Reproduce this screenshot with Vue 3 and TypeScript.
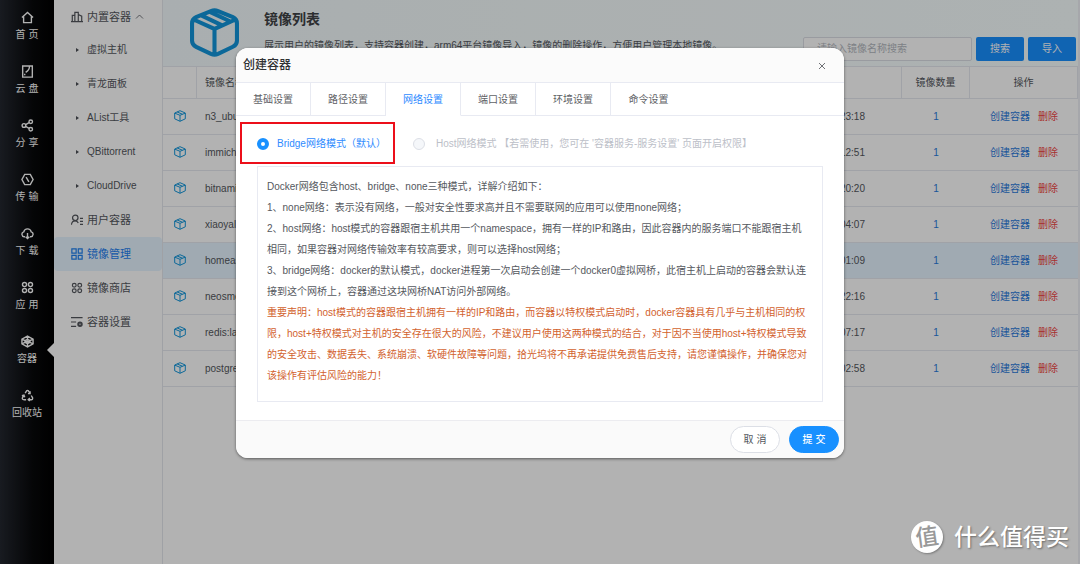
<script setup lang="ts">
import { ref } from 'vue'

const navItems = [
  { label: '首 页', icon: 'home' },
  { label: '云 盘', icon: 'disk' },
  { label: '分 享', icon: 'share' },
  { label: '传 输', icon: 'transfer' },
  { label: '下 载', icon: 'download' },
  { label: '应 用', icon: 'apps' },
  { label: '容器', icon: 'container' },
  { label: '回收站', icon: 'recycle' },
]
const builtIn = ['虚拟主机', '青龙面板', 'AList工具', 'QBittorrent', 'CloudDrive']
const menus = [
  { label: '用户容器', icon: 'user' },
  { label: '镜像管理', icon: 'grid' },
  { label: '镜像商店', icon: 'apps' },
  { label: '容器设置', icon: 'settings' },
]
const rows = [
  { name: 'n3_ubuntu', time: '15:23:18', count: 1 },
  { name: 'immich', time: '14:12:51', count: 1 },
  { name: 'bitnami', time: '13:20:20', count: 1 },
  { name: 'xiaoyaliu', time: '11:04:07', count: 1 },
  { name: 'homeassistant', time: '10:01:09', count: 1 },
  { name: 'neosmemo', time: '18:22:16', count: 1 },
  { name: 'redis:latest', time: '17:07:17', count: 1 },
  { name: 'postgres', time: '16:02:58', count: 1 },
]
const tabs = ['基础设置', '路径设置', '网络设置', '端口设置', '环境设置', '命令设置']
const activeTab = ref('网络设置')
const mode = ref('bridge')
const keyword = ref('')

const intro = [
  'Docker网络包含host、bridge、none三种模式，详解介绍如下：',
  '1、none网络：表示没有网络，一般对安全性要求高并且不需要联网的应用可以使用none网络；',
  '2、host网络：host模式的容器跟宿主机共用一个namespace，拥有一样的IP和路由，因此容器内的服务端口不能跟宿主机\n相同，如果容器对网络传输效率有较高要求，则可以选择host网络；',
  '3、bridge网络：docker的默认模式，docker进程第一次启动会创建一个docker0虚拟网桥，此宿主机上启动的容器会默认连\n接到这个网桥上，容器通过这块网桥NAT访问外部网络。',
]
const warning =
  '重要声明：host模式的容器跟宿主机拥有一样的IP和路由，而容器以特权模式启动时，docker容器具有几乎与主机相同的权\n限，host+特权模式对主机的安全存在很大的风险，不建议用户使用这两种模式的结合，对于因不当使用host+特权模式导致\n的安全攻击、数据丢失、系统崩溃、软硬件故障等问题，拾光坞将不再承诺提供免费售后支持，请您谨慎操作，并确保您对\n该操作有评估风险的能力！'
</script>

<template>
  <div class="app">
    <svg class="defs" aria-hidden="true">
      <symbol id="i-home" viewBox="0 0 14 14"><path d="M1 7 7 1.500 13 7M2.800 5.800V12.500H11.200V5.800" /></symbol>
      <symbol id="i-disk" viewBox="0 0 14 14"><path d="M1.800 1H12.200V13H1.800ZM9 1.500Q9.500 5 5 8M4 9.500V11" /></symbol>
      <symbol id="i-share" viewBox="0 0 14 14"><circle cx="3.200" cy="7" r="2" /><circle cx="10.500" cy="3" r="1.900" /><circle cx="10.500" cy="11" r="1.900" /><path d="M5 6 8.700 4M5 8 8.700 10" /></symbol>
      <symbol id="i-transfer" viewBox="0 0 14 14"><path d="M4 1.500H10L13 7 10 12.500H4L1 7ZM5.500 4.500 8.500 9.500" /></symbol>
      <symbol id="i-download" viewBox="0 0 14 14"><path d="M4.300 10.500H3.500A2.700 2.700 0 0 1 3 5.200 4.100 4.100 0 0 1 11 5.200 2.700 2.700 0 0 1 10.500 10.500H9.700M7 6.500V12.500M5 10.500 7 12.500 9 10.500" /></symbol>
      <symbol id="i-apps" viewBox="0 0 14 14"><circle cx="3.800" cy="3.800" r="2.200" /><circle cx="10.200" cy="3.800" r="2.200" /><circle cx="3.800" cy="10.200" r="2.200" /><circle cx="10.200" cy="10.200" r="2.200" /></symbol>
      <symbol id="i-container" viewBox="0 0 14 14"><path d="M7 1.200 13 4.500V9.500L7 12.800 1 9.500V4.500ZM1 4.500 7 7.500 13 4.500M1 9.500 7 6.500 13 9.500M7 1.500V4.800M7 12.500V9.200M4.300 6 7 4.700 9.700 6V8L7 9.300 4.300 8Z" /></symbol>
      <symbol id="i-recycle" viewBox="0 0 14 14"><path d="M4.500 4.500 6 2Q7 1 8 2L9.500 4.500M9.800 2.500V5H7.500M11 7 12.500 9.500Q12.800 11.500 11 11.500H8M9.500 9.800 7.800 11.500 9.500 13M5.500 11.500H3Q1 11.200 1.500 9.500L3 7M1 7.300 3.200 6.600 4 8.800" /></symbol>
      <symbol id="i-building" viewBox="0 0 14 14"><path d="M0 12.500H14M1.500 12.500V5H4.500M4.500 12.500V1.500H8.500V12.500M8.500 4 12.500 6V12.500" /></symbol>
      <symbol id="i-user" viewBox="0 0 14 14"><circle cx="5" cy="4.500" r="3.200" /><path d="M.5 12.500Q1 8 5 8 7.500 8 8.500 10.500M10.500 5H14M10.500 8.500H14M10.500 12H14" /></symbol>
      <symbol id="i-grid" viewBox="0 0 14 14"><path d="M1 1H6V6H1ZM8.500 1H13V6H8.500ZM1 8.500H6V13H1ZM8.500 8.500H13V13H8.500Z" /></symbol>
      <symbol id="i-settings" viewBox="0 0 14 14"><path d="M0 2H13.500M0 7H6M0 12H6" /><circle cx="10.500" cy="9.500" r="2" stroke-width="2.400" /></symbol>
      <symbol id="i-box" viewBox="0 0 48 48"><path d="M20.500 3Q24 1.500 27.500 3L42 9Q46 11 46 15V32Q46 36 42 38L27.500 45Q24 46.500 20.500 45L6 38Q2 36 2 32V15Q2 11 6 9ZM4 11.500 24 20.500 44 11.500M24 20.500V45M11.500 7.500 31.500 17M20 4 39 13" /></symbol>
      <symbol id="i-box-small" viewBox="0 0 12 12"><path d="M6 .7 11.300 3V8.800L6 11.300.7 8.800V3ZM.9 3.200 6 5.300 11.100 3.200M6 5.300V11.200M3.200 2 8.400 4.200" /></symbol>
    </svg>

    <nav class="rail">
      <a v-for="n in navItems" :key="n.label" href="#" class="rail-item" :class="{ current: n.icon === 'container' }">
        <svg class="icon"><use :href="'#i-' + n.icon" /></svg>
        <span>{{ n.label }}</span>
      </a>
    </nav>

    <aside class="side">
      <button class="side-row head">
        <svg class="icon"><use href="#i-building" /></svg>内置容器
        <svg class="chev" viewBox="0 0 8 5"><path d="M.5 4.500 4 1 7.500 4.500" /></svg>
      </button>
      <a v-for="b in builtIn" :key="b" href="#" class="side-row sub">{{ b }}</a>
      <a v-for="m in menus" :key="m.label" href="#" class="side-row" :class="{ active: m.icon === 'grid' }">
        <svg class="icon"><use :href="'#i-' + m.icon" /></svg>{{ m.label }}
      </a>
    </aside>

    <main class="main">
      <header class="banner">
        <svg class="logo"><use href="#i-box" /></svg>
        <div class="intro">
          <h1>镜像列表</h1>
          <p>展示用户的镜像列表，支持容器创建，arm64平台镜像导入，镜像的删除操作，方便用户管理本地镜像。</p>
        </div>
        <form class="search" @submit.prevent>
          <input v-model="keyword" type="text" placeholder="请输入镜像名称搜索" aria-label="请输入镜像名称搜索" />
          <button type="submit">搜索</button>
          <button type="button">导入</button>
        </form>
      </header>
      <table>
        <colgroup><col class="c-icon" /><col class="c-name" /><col /><col class="c-count" /><col class="c-ops" /></colgroup>
        <thead>
          <tr><th></th><th class="left">镜像名称</th><th></th><th>镜像数量</th><th>操作</th></tr>
        </thead>
        <tbody>
          <tr v-for="r in rows" :key="r.name" :class="{ hover: r.name === 'homeassistant' }">
            <td class="pic"><svg class="mini"><use href="#i-box-small" /></svg></td>
            <td class="left">{{ r.name }}</td>
            <td class="time">{{ r.time }}</td>
            <td><a href="#">{{ r.count }}</a></td>
            <td><div class="ops"><a href="#">创建容器</a><a href="#" class="del">删除</a></div></td>
          </tr>
        </tbody>
      </table>
    </main>

    <div class="mask">
      <section class="dialog" role="dialog" aria-labelledby="dialog-title">
        <header class="dialog-head">
          <h2 id="dialog-title">创建容器</h2>
          <button class="close" aria-label="关闭"><svg viewBox="0 0 8 8"><path d="M1 1 7 7M7 1 1 7" /></svg></button>
        </header>
        <div class="tabs" role="tablist">
          <button v-for="t in tabs" :key="t" role="tab" :aria-selected="t === activeTab" :class="{ on: t === activeTab }" @click="activeTab = t">{{ t }}</button>
          <span class="tab-rest"></span>
        </div>
        <div class="body">
          <div class="modes">
            <label class="mode chosen"><input v-model="mode" type="radio" name="mode" value="bridge" />Bridge网络模式（默认）</label>
            <label class="mode disabled"><input v-model="mode" type="radio" name="mode" value="host" disabled />Host网络模式 【若需使用，您可在 '容器服务-服务设置' 页面开启权限】</label>
          </div>
          <div class="notes">
            <p v-for="line in intro" :key="line">{{ line }}</p>
            <p class="warn">{{ warning }}</p>
          </div>
        </div>
        <footer class="dialog-foot">
          <button>取 消</button>
          <button class="primary">提 交</button>
        </footer>
      </section>
    </div>

    <div class="watermark"><span class="seal"><span class="seal-char">值</span></span><span>什么值得买</span></div>
  </div>
</template>

<style>
body { margin: 0; }
</style>

<style scoped>
.app {
  position: relative;
  display: flex;
  min-height: 100vh;
  background: #fff;
  font: 10px/14px "Liberation Sans", "Noto Sans CJK SC", sans-serif;
  color: #54575d;
  text-spacing-trim: space-all;
  overflow: hidden;
}
.app *, .app *::before, .app *::after { box-sizing: border-box; }
.defs { position: absolute; width: 0; height: 0; }
svg { fill: none; stroke: currentColor; flex: none; }
a { color: inherit; text-decoration: none; }
button, input { font: inherit; color: inherit; }
button { cursor: pointer; }
h1, h2, p { margin: 0; }

.rail { width: 54px; flex: none; padding-top: 11px; background: linear-gradient(90deg, #23272f, #08090b 60%, #000); color: #fff; }
.rail-item { position: relative; display: flex; flex-direction: column; align-items: center; gap: 4px; height: 54px; font-size: 10px; white-space: nowrap; }
.rail-item .icon { width: 13px; height: 13px; stroke-width: 1.5; }
.current::after { content: ""; position: absolute; right: 0; top: 8px; border: 7px solid transparent; border-left: 0; border-right-color: #fff; }

.side { width: 109px; flex: none; border-right: 1px solid #e4e7ed; }
.side-row { display: flex; align-items: center; gap: 4px; width: 100%; height: 34px; padding: 0 0 0 17px; border: 0; background: none; font-size: 11px; }
.side-row .icon { width: 12px; height: 12px; stroke-width: 1.4; }
.head { height: 33px; }
.chev { width: 9px; height: 5px; stroke-width: .8; }
.sub { font-size: 10px; gap: 8px; padding-left: 22px; }
.sub::before { content: ""; border: 2px solid transparent; border-left: 3px solid #4c4f55; border-right: 0; }
.active { color: #1e80f0; background: #e6f4ff; border-radius: 4px; }

.main { flex: 1; min-width: 0; border-right: 2px solid #eef0f5; }
.banner { display: flex; height: 66px; padding: 8px 2px 0 27px; background: linear-gradient(90deg, #f3fafc, #f8ffff); }
.logo { width: 49px; height: 49px; stroke-width: 4; color: #1296db; }
.intro { flex: 1; min-width: 0; margin-left: 25px; white-space: nowrap; }
h1 { font-size: 14px; line-height: 22px; color: #404246; }
.intro p { margin-top: 9px; }
.search { display: flex; gap: 4px; margin-top: 29px; height: 24px; }
.search input { width: 169px; padding: 0 13px; border: 1px solid #dcdfe6; border-radius: 2px; background: #fff; outline: 0; }
.search input::placeholder { color: #b4b8c0; opacity: 1; }
.search button { width: 48px; border: 0; border-radius: 2px; padding: 0; background: #1890ff; color: #fff; }

table { width: 100%; table-layout: fixed; border-collapse: separate; border-spacing: 0; }
.c-icon { width: 34px; }
.c-name { width: 340px; }
.c-count { width: 68px; }
.c-ops { width: 108px; }
th, td { height: 36px; padding: 0; border-bottom: 1px solid #e6e8ef; text-align: center; font-weight: 400; }
th { height: 33px; border-top: 1px solid #e6e8ef; border-right: 1px solid #e6e8ef; }
th.left, td.left { padding-left: 8px; text-align: left; }
td a { color: #2979dc; }
td.pic { padding-bottom: 2px; line-height: 0; }
.mini { width: 12px; height: 12px; stroke-width: 1; color: #1296db; }
td.time { padding-right: 37px; text-align: right; }
.ops { display: flex; gap: 8px; padding-left: 20px; }
td a.del { color: #f04444; }
.hover td { background: #e6f4ff; }

.mask { position: absolute; inset: 0; padding: 48px 16px 0; background: rgba(0, 0, 0, .3); }
.dialog { max-width: 608px; margin: 0 auto; background: #fff; border-radius: 12px; overflow: hidden; box-shadow: 0 1px 3px rgba(0, 0, 0, .5); }
.dialog-head { display: flex; justify-content: space-between; height: 34px; padding: 0 17px 0 7px; background: #fbfbfb; }
h2 { font-size: 12px; line-height: 34px; font-weight: 500; color: #303133; }
.close { width: 10px; padding: 2px 0 0; border: 0; background: none; color: #606266; }
.close svg { display: block; width: 10px; height: 8px; stroke-width: .9; }
.tabs { display: flex; height: 34px; border-top: 1px solid #e8eaf2; }
.tabs button { width: 75px; padding: 2px 0 0; border: 0; border-right: 1px solid #e8eaf2; border-bottom: 1px solid #e8eaf2; background: #fff; color: #606266; }
.tabs button:nth-child(6) { border-right: 0; }
.tabs .on { border-bottom-color: #fff; color: #2e8bff; }
.tab-rest { flex: 1; border-bottom: 1px solid #e8eaf2; }
.body { padding: 6px 21px 18px 4px; }
.modes { display: flex; align-items: center; }
.mode { display: flex; align-items: center; gap: 8px; height: 42px; padding-top: 1px; }
.mode input { appearance: none; width: 12px; height: 12px; margin: 0; border: 1px solid #dcdfe6; border-radius: 50%; background: #f5f7fa; }
.chosen { width: 155px; padding-left: 15px; border: 2px solid #ec0f1a; color: #2e8bff; }
.chosen input { border: 4px solid #1890ff; background: #fff; }
.disabled { gap: 11px; margin-left: 18px; color: #bcc0c8; }
.notes { margin: 2px 0 0 17px; padding: 9px; min-height: 236px; border: 1px solid #e8eaf2; line-height: 21px; color: #55585e; white-space: pre-line; }
.warn { color: #d2622e; }
.dialog-foot { display: flex; justify-content: flex-end; align-items: center; gap: 9px; height: 38px; padding: 0 5px; border-top: 1px solid #ececf0; background: #fafafa; }
.dialog-foot button { width: 50px; height: 27px; padding: 0; border: 1px solid #dcdfe6; border-radius: 14px; background: #fff; }
.dialog-foot .primary { border-color: #1890ff; background: #1890ff; color: #fff; font-weight: 500; }

.watermark { position: absolute; right: 11px; bottom: 11px; display: flex; align-items: center; gap: 11px; color: #fff; font-size: 23px; line-height: 32px; font-weight: 500; text-shadow: 1px 1px 2px rgba(0, 0, 0, .4); }
.seal { width: 32px; height: 32px; border-radius: 50%; background: #fff; color: #999; text-align: center; text-shadow: none; box-shadow: 1px 1px 2px rgba(0, 0, 0, .3); }
.seal-char { display: block; transform: rotate(-8deg); }
</style>
